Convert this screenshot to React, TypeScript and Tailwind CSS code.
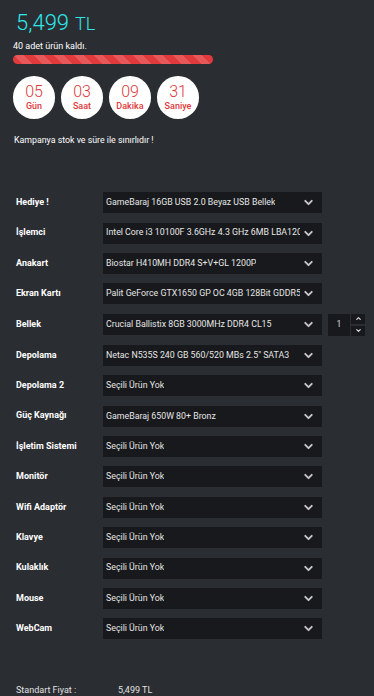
import { ChevronDown, ChevronUp } from "lucide-react";

const rows: { label: string; value: string; qty?: boolean }[] = [
  { label: "Hediye !", value: "GameBaraj 16GB USB 2.0 Beyaz USB Bellek" },
  { label: "İşlemci", value: "Intel Core i3 10100F 3.6GHz 4.3 GHz 6MB LBA1200" },
  { label: "Anakart", value: "Biostar H410MH DDR4 S+V+GL 1200P" },
  { label: "Ekran Kartı", value: "Palit GeForce GTX1650 GP OC 4GB 128Bit GDDR5" },
  { label: "Bellek", value: "Crucial Ballistix 8GB 3000MHz DDR4 CL15", qty: true },
  { label: "Depolama", value: "Netac N535S 240 GB 560/520 MBs 2.5\" SATA3" },
  { label: "Depolama 2", value: "Seçili Ürün Yok" },
  { label: "Güç Kaynağı", value: "GameBaraj 650W 80+ Bronz" },
  { label: "İşletim Sistemi", value: "Seçili Ürün Yok" },
  { label: "Monitör", value: "Seçili Ürün Yok" },
  { label: "Wifi Adaptör", value: "Seçili Ürün Yok" },
  { label: "Klavye", value: "Seçili Ürün Yok" },
  { label: "Kulaklık", value: "Seçili Ürün Yok" },
  { label: "Mouse", value: "Seçili Ürün Yok" },
  { label: "WebCam", value: "Seçili Ürün Yok" },
];

const timer = [
  { n: "05", l: "Gün" },
  { n: "03", l: "Saat" },
  { n: "09", l: "Dakika" },
  { n: "31", l: "Saniye" },
];

export default function App() {
  return (
    <div className="min-h-[696px] w-[374px] overflow-hidden bg-[#2a2d32] text-white" style={{ fontFamily: "Roboto, 'Liberation Sans', sans-serif" }}>
      <div className="px-[13px] pt-[9px]">
        <div className="flex items-baseline pl-[3px] font-light text-[#2ee6ec]">
          <span className="text-[22px] leading-[28px]">5,499</span>
          <span className="ml-[6px] text-[18px]">TL</span>
        </div>
        <p className="mt-[3px] text-[9px] leading-[12px] text-white">40 adet ürün kaldı.</p>
        <div className="mt-[3px] h-[9px] w-[200px] rounded-full bg-[repeating-linear-gradient(45deg,#e03a3c_0px,#e03a3c_7px,#e6585a_7px,#e6585a_14px)]" />
        <div className="mt-[12px] flex gap-[6px]">
          {timer.map((t) => (
            <div key={t.l} className="flex h-[43px] w-[42px] flex-col items-center justify-center rounded-full bg-white text-[#e0383a]">
              <span className="text-[16px] font-light leading-[17px]">{t.n}</span>
              <span className="text-[9px] font-medium leading-[12px]">{t.l}</span>
            </div>
          ))}
        </div>
        <p className="mt-[15px] pl-[1px] text-[8.8px] text-white">Kampanya stok ve süre ile sınırlıdır !</p>
      </div>

      <div className="mt-[45px] flex flex-col gap-[9.36px]">
        {rows.map((r) => (
          <div key={r.label} className="flex items-center">
            <span className="w-[103px] pl-[16px] text-[9px] font-bold">{r.label}</span>
            <div className="flex h-[21px] w-[219px] items-center justify-between bg-[#18191c] pl-[3px] pr-[7px]">
              <span className="overflow-hidden whitespace-nowrap text-[8.8px] text-[#e6e6e6]">{r.value}</span>
              <ChevronDown className="ml-[2px] h-[13px] w-[13px] shrink-0 text-[#c8c8c8]" strokeWidth={3.5} />
            </div>
            {r.qty && (
              <div className="ml-[6px] flex items-center gap-[1px]">
                <div className="flex h-[22px] w-[22px] items-center justify-center bg-[#18191c] text-[8.5px] text-[#ddd]">1</div>
                <div className="flex flex-col gap-[2px]">
                  <div className="flex h-[10px] w-[14px] items-center justify-center bg-[#18191c]">
                    <ChevronUp className="h-[7px] w-[7px] text-[#ddd]" strokeWidth={4} />
                  </div>
                  <div className="flex h-[10px] w-[14px] items-center justify-center bg-[#18191c]">
                    <ChevronDown className="h-[7px] w-[7px] text-[#ddd]" strokeWidth={4} />
                  </div>
                </div>
              </div>
            )}
          </div>
        ))}
      </div>

      <div className="mt-[45px] flex text-[9px] text-[#e0e0e0]">
        <span className="w-[118px] pl-[16px]">Standart Fiyat :</span>
        <span>5,499 TL</span>
      </div>
      <div className="h-[20px]" />
    </div>
  );
}
